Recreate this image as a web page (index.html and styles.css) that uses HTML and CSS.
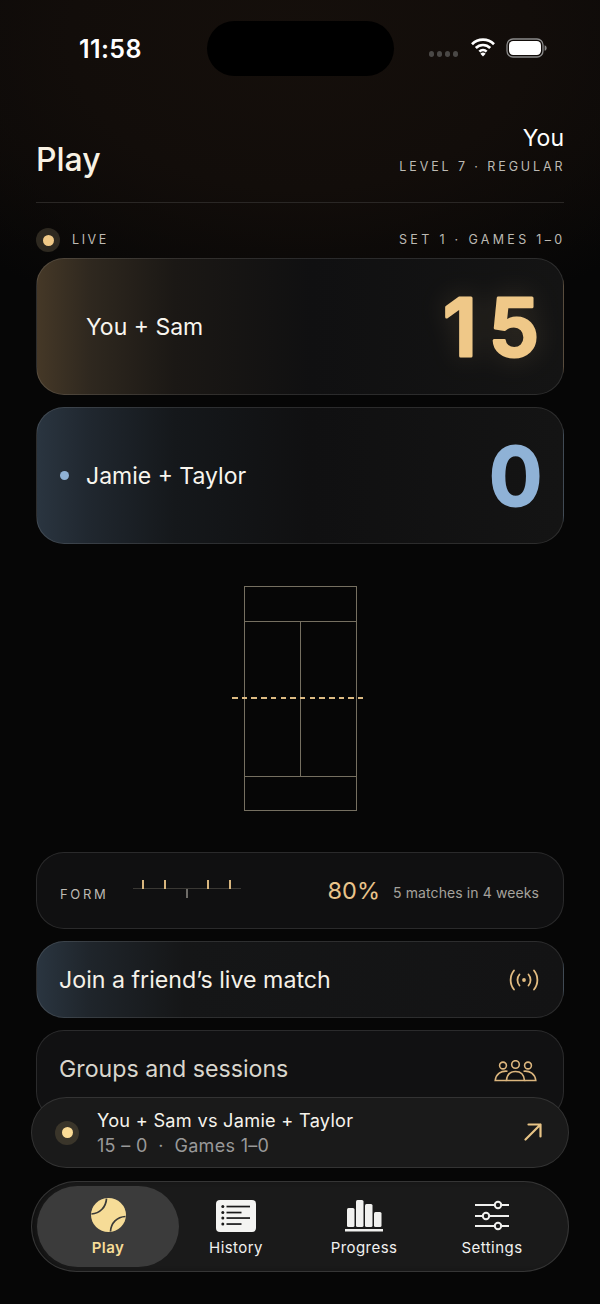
FILE: index.html
```html
<!DOCTYPE html>
<html lang="en">
<head>
<meta charset="utf-8">
<title>Play</title>
<link rel="stylesheet" href="styles.css">
</head>
<body>
<div class="screen">
  <div class="status">
    <span class="clock">11:58</span>
    <div class="status-icons">
      <span class="signal"><i></i><i></i><i></i><i></i></span>
      <svg class="wifi" width="26" height="20" viewBox="0 0 26 20"><path d="M2 7.2a15.6 15.6 0 0 1 22 0M5.8 11a10.2 10.2 0 0 1 14.4 0M9.4 14.6a5.1 5.1 0 0 1 7.2 0" fill="none" stroke="#fff" stroke-width="2.7"/><path d="M13 19.4l-2.6-2.7a3.7 3.7 0 0 1 5.2 0z" fill="#fff"/></svg>
      <svg class="battery" width="42" height="20" viewBox="0 0 42 20"><rect x="1" y="1" width="36" height="18" rx="6" fill="none" stroke="#8b8b8b" stroke-width="1.3"/><rect x="3" y="3" width="32" height="14" rx="4.2" fill="#fff"/><path d="M38.6 7.2c1.4.4 2 1.4 2 2.8s-.6 2.400-2 2.800z" fill="#8b8b8b"/></svg>
    </div>
  </div>
  <div class="island"></div>

  <main class="content">
    <header class="head">
      <h1 class="title">Play</h1>
      <div class="profile">
        <div class="profile-name">You</div>
        <div class="caps">LEVEL 7 · REGULAR</div>
      </div>
    </header>

    <div class="live-row">
      <div class="live"><span class="live-dot"></span><span class="caps live-label">LIVE</span></div>
      <span class="caps wide">SET 1 · GAMES 1–0</span>
    </div>

    <section class="card score gold">
      <span class="team">You + Sam</span>
      <svg class="digits glow" width="112" height="80" viewBox="0 0 112 80"><text class="digit digit-spaced gold-text" x="2" y="69">15</text></svg>
    </section>
    <section class="card score blue">
      <span class="serve"></span>
      <span class="team">Jamie + Taylor</span>
      <svg class="digits" width="70" height="80" viewBox="0 0 70 80"><text class="digit blue-text" x="59" y="69" text-anchor="end">0</text></svg>
    </section>

    <div class="court-wrap">
      <div class="court">
        <div class="court-end"></div>
        <div class="court-mid"><div class="court-half"></div><div class="court-half"></div></div>
        <div class="court-end"></div>
        <div class="net"></div>
      </div>
    </div>

    <section class="card row form">
      <span class="caps form-label">FORM</span>
      <div class="ticks">
        <i class="tick up"></i><i class="tick up"></i><i class="tick down"></i><i class="tick up"></i><i class="tick up"></i>
      </div>
      <span class="pct">80%</span>
      <span class="form-note">5 matches in 4 weeks</span>
    </section>

    <section class="card row join">
      <span class="row-label">Join a friend’s live match</span>
      <svg width="30" height="24" viewBox="0 0 30 24" fill="none" stroke="#e3bd82" stroke-width="1.800" stroke-linecap="round"><path d="M5 2.500C.500 8 .500 16 5 21.500M25 2.500C29.500 8 29.500 16 25 21.500M10.500 6.500C7.800 9.500 7.800 14.500 10.500 17.500M19.500 6.500C22.200 9.500 22.200 14.500 19.500 17.500"/><circle cx="15" cy="12" r="1.900" fill="#e3bd82" stroke="none"/></svg>
    </section>

    <section class="card row groups">
      <span class="row-label dim">Groups and sessions</span>
      <svg class="groups-icon" width="43" height="22" viewBox="0 0 43 22" fill="none" stroke="#dcb67e" stroke-width="1.600"><circle cx="9" cy="5.500" r="3.400"/><circle cx="34" cy="5.500" r="3.400"/><circle cx="21.500" cy="4.500" r="3.800"/><path d="M13.500 11.200C7 10.500 2 14 1.200 20.500H12.500M29.500 11.200C36 10.500 41 14 41.800 20.500H30.500"/><path d="M12.500 20.500C13 14.500 16.500 11.500 21.500 11.500S30 14.500 30.500 20.500Z"/></svg>
    </section>
  </main>

  <div class="dock">
    <div class="mini">
      <span class="live-dot mini-dot"></span>
      <div class="mini-text">
        <div class="mini-title">You + Sam vs Jamie + Taylor</div>
        <div class="mini-sub">15 – 0 &nbsp;·&nbsp; Games 1–0</div>
      </div>
      <svg class="arrow" width="18" height="18" viewBox="0 0 18 18" fill="none" stroke="#e8c486" stroke-width="2.200" stroke-linecap="round" stroke-linejoin="round"><path d="M1.500 16.500L16.500 1.500M4.500 1.500H16.500V13.500"/></svg>
    </div>
    <nav class="tabs">
      <a class="tab active">
        <span class="tab-icon"><svg width="35" height="34" viewBox="0 0 35 34"><ellipse cx="17.500" cy="17" rx="17.500" ry="17" fill="#f6dc97"/><path d="M15.500 .6C15 9 9 15.500 .4 16M34.500 18.500C26 18.800 20 25 19.500 33.500" fill="none" stroke="#3a3a38" stroke-width="1.700"/></svg></span>
        <span class="tab-text">Play</span>
      </a>
      <a class="tab">
        <span class="tab-icon"><svg width="40" height="32" viewBox="0 0 40 32"><rect width="40" height="32" rx="4" fill="#f4f4f2"/><g fill="#1a1a1a"><circle cx="6.800" cy="6.500" r="1.500"/><circle cx="6.800" cy="12.500" r="1.500"/><circle cx="6.800" cy="18" r="1.500"/><circle cx="6.800" cy="24" r="1.500"/><rect x="10.500" y="5.700" width="23.500" height="1.700"/><rect x="10.500" y="11.700" width="15" height="1.700"/><rect x="10.500" y="17.200" width="23.500" height="1.700"/><rect x="10.500" y="23.200" width="15" height="1.700"/></g></svg></span>
        <span class="tab-text">History</span>
      </a>
      <a class="tab">
        <span class="tab-icon"><svg width="38" height="32" viewBox="0 0 38 32" fill="#f1f1ef"><rect x="2" y="8" width="7.500" height="19" rx="1.500"/><rect x="11" y="0" width="7.500" height="27" rx="1.500"/><rect x="20" y="4" width="7.500" height="23" rx="1.500"/><rect x="29" y="12" width="7.500" height="15" rx="1.500"/><rect y="29" width="38" height="2.500"/></svg></span>
        <span class="tab-text">Progress</span>
      </a>
      <a class="tab">
        <span class="tab-icon"><svg width="34" height="32" viewBox="0 0 34 32" fill="none" stroke="#f1f1ef" stroke-width="2"><path d="M0 5H19.500M26.500 5H34M0 16H7.500M14.500 16H34M0 26H19.500M26.500 26H34"/><circle cx="23" cy="5" r="3.200"/><circle cx="11" cy="16" r="3.200"/><circle cx="23" cy="26" r="3.200"/></svg></span>
        <span class="tab-text">Settings</span>
      </a>
    </nav>
  </div>
</div>
</body>
</html>
```

FILE: styles.css
```css
* { box-sizing: border-box; }
html, body { margin: 0; padding: 0; background: #060606; }
body { font-family: Inter, "Liberation Sans", sans-serif; color: #f6f2ea; }
.screen {
  position: relative;
  width: 600px;
  height: 1304px;
  overflow: hidden;
  background:
    radial-gradient(ellipse 460px 300px at 50% 40px, #150f0b 0%, #120d0a 50%, rgba(10,8,7,0) 100%),
    linear-gradient(#0b0908 0, #0a0807 150px, #060606 250px);
}
.status { display: flex; justify-content: space-between; align-items: center; height: 97px; padding: 0 52px 0 79px; }
.clock { font-size: 25px; font-weight: 600; color: #fff; letter-spacing: .4px; }
.status-icons { display: flex; align-items: center; gap: 9px; }
.signal { display: flex; gap: 2.500px; margin-top: 10px; margin-right: 3px; }
.signal i { width: 5.500px; height: 6px; border-radius: 50%; background: #4a4846; }
.wifi { margin-top: -4px; }
.battery { margin-top: -2px; margin-left: 1px; }
.island { position: absolute; left: 207px; top: 21px; width: 187px; height: 55px; border-radius: 28px; background: #000; }

.content { padding: 0 36px; }
.head { display: flex; justify-content: space-between; align-items: flex-end; height: 107px; padding: 28px 0 27px; border-bottom: 1px solid #2a2725; margin-top: -1px; }
.title { margin: 0 0 -4px; font-size: 32px; line-height: 38px; font-weight: 500; color: #f8f2e4; }
.profile { text-align: right; }
.profile-name { font-size: 23px; line-height: 28px; font-weight: 400; color: #fff; margin-bottom: 7px; }
.caps { font-size: 12.500px; line-height: 16px; letter-spacing: 2.900px; color: #bdbab3; margin-right: -1.500px; }
.caps.wide { letter-spacing: 3.320px; }
.caps.live-label { letter-spacing: 2.600px; }

.live-row { display: flex; justify-content: space-between; align-items: center; height: 24px; margin: 25px 0 6px; }
.live { display: flex; align-items: center; gap: 12px; }
.live-dot { position: relative; display: block; width: 24px; height: 24px; border-radius: 50%; background: #2e2920; }
.live-dot::after { content: ""; position: absolute; left: 6.500px; top: 6.500px; width: 11px; height: 11px; border-radius: 50%; background: #f0c987; }

.card { border: 1px solid rgba(255,255,255,.11); border-radius: 28px; background: #121213; }
.score { position: relative; display: flex; align-items: center; justify-content: space-between; height: 137px; padding: 0 10px 0 50px; margin-bottom: 12px; }
.gold { background: linear-gradient(90deg, #453827 0, #2f281f 10%, #1b1815 26%, #101011 52%, #141414 100%); }
.blue { background: linear-gradient(90deg, #2a3540 0, #20272f 10%, #15181b 26%, #101011 52%, #141414 100%); }
.team { margin-left: -1px; font-size: 23px; font-weight: 400; color: #f8f5ee; }
.serve { position: absolute; left: 23px; top: 63px; width: 9px; height: 9px; border-radius: 50%; background: #8fb2d6; }
.digits { display: block; overflow: visible; }
.digit { font-size: 80px; font-weight: 600; stroke-width: 3px; stroke-linejoin: round; paint-order: stroke; }
.digit-spaced { letter-spacing: 12px; }
.glow { filter: drop-shadow(0 0 14px rgba(239,200,136,.16)); }
.gold-text { fill: #efc888; stroke: #efc888; }
.blue-text { fill: #8fb2d6; stroke: #8fb2d6; }

.court-wrap { display: flex; justify-content: center; padding: 30px 0 41px; margin-left: 1px; }
.court { position: relative; display: flex; flex-direction: column; width: 113px; height: 225px; border: 1px solid #756f60; }
.court-end { height: 34px; }
.court-mid { display: flex; height: 156px; border-top: 1px solid #756f60; border-bottom: 1px solid #756f60; flex: none; }
.court-half { flex: 1; }
.court-half + .court-half { border-left: 1px solid #756f60; }
.net { position: absolute; left: -13px; right: -7px; top: 110px; height: 1.500px; background: repeating-linear-gradient(90deg, #dcba82 0 5.500px, transparent 5.500px 9.700px); }

.row { display: flex; align-items: center; height: 77px; padding: 0 24px 0 23px; margin-bottom: 12px; }
.form { background: #101011; }
.form-label { font-size: 13px; letter-spacing: 2.700px; margin: 6px 24px 0 0; }
.ticks { position: relative; display: flex; justify-content: space-around; width: 108px; height: 1px; margin-top: -4px; background: #3a3834; }
.tick { position: absolute; top: -8px; width: 2px; height: 9px; background: #d8b67e; }
.tick:nth-child(1) { left: 9.500px; }
.tick:nth-child(2) { left: 31px; }
.tick:nth-child(3) { left: 53px; top: 1px; background: #6e6c68; }
.tick:nth-child(4) { left: 74.500px; }
.tick:nth-child(5) { left: 96px; }
.pct { margin-left: auto; margin-right: 13px; font-size: 23.500px; font-weight: 400; color: #e9c48b; }
.form-note { margin-top: 4px; font-size: 14px; color: #a5a29c; letter-spacing: .1px; }
.row-label { flex: 1; margin-left: -1px; font-size: 23.200px; font-weight: 400; color: #f5f1e8; }
.row-label.dim { color: #d9d6cd; }
.join { background: linear-gradient(90deg, #2a3540 0, #1f252b 10%, #151617 28%, #131314 100%); padding-right: 24px; }
.groups { background: #111112; margin-bottom: 0; height: 90px; align-items: flex-start; padding-top: 24px; padding-right: 26px; }
.groups-icon { margin-top: 5px; }

.dock { position: absolute; left: 31px; right: 31px; top: 1097px; display: flex; flex-direction: column; gap: 13px; }
.mini { display: flex; align-items: center; height: 71px; padding: 0 26px 0 23px; border: 1px solid rgba(255,255,255,.11); border-radius: 36px; background: #1a1a1a; }
.mini-dot { flex: none; margin-right: 18px; background: #3a352a; }
.mini-dot::after { background: #fbdc96; }
.mini-text { flex: 1; padding-top: 1px; }
.mini-title { font-size: 18.200px; line-height: 25px; font-weight: 400; color: #f6f3ec; letter-spacing: .26px; }
.mini-sub { font-size: 18px; line-height: 26px; color: #999; letter-spacing: .3px; }
.arrow { margin-top: -2px; }
.tabs { position: relative; display: grid; grid-template-columns: repeat(4, 1fr); height: 91px; padding: 0 12px; border: 1px solid rgba(255,255,255,.12); border-radius: 46px; background: #1a1a1a; box-shadow: inset 6px 0 6px -3px #0f0f0f; }
.tab { position: relative; display: flex; flex-direction: column; align-items: center; padding-top: 16px; height: 100%; font-size: 15px; font-weight: 400; color: #f1f1ef; letter-spacing: .45px; }
.tab-icon { position: relative; display: flex; align-items: flex-end; height: 34px; margin-bottom: 7px; }
.tab-icon svg { display: block; }
.tab-text { position: relative; line-height: 18px; }
.tab.active { color: #f6dc97; font-weight: 600; }
.tab.active::before { content: ""; position: absolute; left: -7px; right: -7px; top: 4px; height: 81px; border-radius: 41px; background: #3b3b3b; }
```
